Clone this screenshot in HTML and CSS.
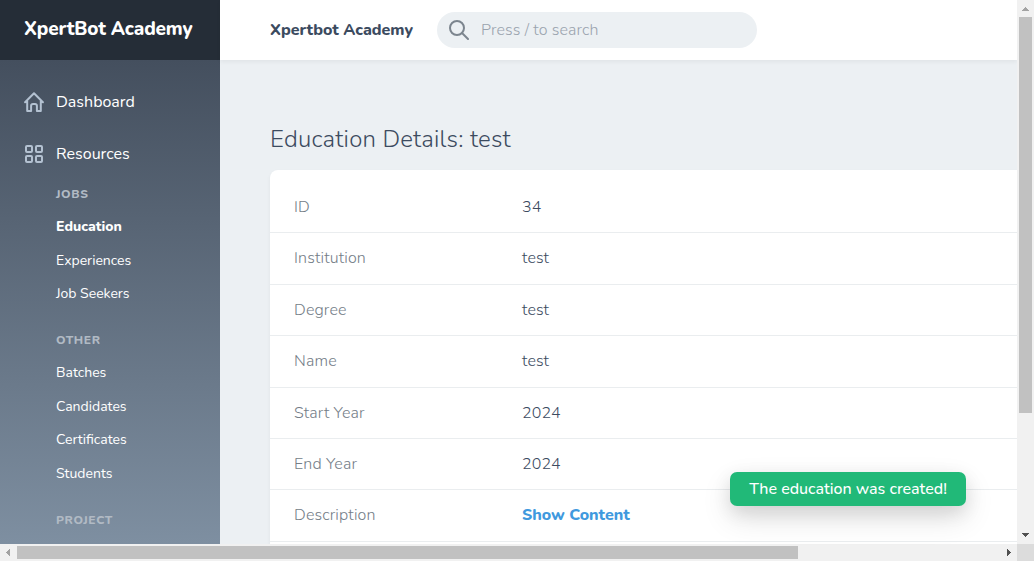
FILE: index.html
```html
<!DOCTYPE html>
<html lang="en">
<head>
<meta charset="utf-8">
<title>Education Details</title>
<link rel="stylesheet" href="styles.css">
</head>
<body>
<div class="window">
  <div class="viewport">
    <aside class="sidebar">
      <div class="brand"><span class="brand-name">XpertBot Academy</span></div>
      <nav class="nav">
        <a class="nav-main">
          <svg class="nav-icon" viewBox="0 0 20 20"><path d="M1.1 10.3 10 1.3l8.9 9M3.2 9v9.9h3.9v-5.2a1.9 1.9 0 0 1 1.9-1.8h2a1.9 1.9 0 0 1 1.9 1.8v5.2h3.9V9"/></svg>
          <span class="nav-text">Dashboard</span>
        </a>
        <a class="nav-main">
          <svg class="nav-icon" viewBox="0 0 20 20"><rect x="2" y="2" width="6" height="6" rx="1"/><rect x="12" y="2" width="6" height="6" rx="1"/><rect x="2" y="12" width="6" height="6" rx="1"/><rect x="12" y="12" width="6" height="6" rx="1"/></svg>
          <span class="nav-text">Resources</span>
        </a>
        <h4 class="group">JOBS</h4>
        <a class="link active">Education</a>
        <a class="link">Experiences</a>
        <a class="link">Job Seekers</a>
        <h4 class="group next">OTHER</h4>
        <a class="link">Batches</a>
        <a class="link">Candidates</a>
        <a class="link">Certificates</a>
        <a class="link">Students</a>
        <h4 class="group next">PROJECT</h4>
      </nav>
    </aside>
    <div class="content">
      <header class="topbar">
        <span class="site">Xpertbot Academy</span>
        <div class="search">
          <svg class="search-icon" viewBox="0 0 20 20"><circle cx="8" cy="8" r="7"/><path d="m13 13 6 6"/></svg>
          <span class="hint">Press / to search</span>
        </div>
      </header>
      <main class="page">
        <h1 class="title">Education Details: test</h1>
        <div class="card">
          <div class="row"><span class="label">ID</span><span class="value">34</span></div>
          <div class="row"><span class="label">Institution</span><span class="value">test</span></div>
          <div class="row"><span class="label">Degree</span><span class="value">test</span></div>
          <div class="row"><span class="label">Name</span><span class="value">test</span></div>
          <div class="row"><span class="label">Start Year</span><span class="value">2024</span></div>
          <div class="row"><span class="label">End Year</span><span class="value">2024</span></div>
          <div class="row"><span class="label">Description</span><a class="show">Show Content</a></div>
          <div class="row"></div>
        </div>
      </main>
    </div>
  </div>
  <div class="vbar">
    <svg class="arrow" viewBox="0 0 17 17"><path class="dim" d="M8 7h1v1h1v1h1v1h1v1H5v-1h1V9h1V8h1z"/></svg>
    <div class="vthumb"></div>
    <svg class="arrow end" viewBox="0 0 17 17"><path d="M5 6h7v1h-1v1h-1v1H9v1H8V9H7V8H6V7H5z"/></svg>
  </div>
  <div class="hbar">
    <svg class="arrow" viewBox="0 0 17 17"><path class="dim" d="M10 5v7H9v-1H8v-1H7V9H6V8h1V7h1V6h1V5z"/></svg>
    <div class="hthumb"></div>
    <svg class="arrow end" viewBox="0 0 17 17"><path d="M7 5v7h1v-1h1v-1h1V9h1V8h-1V7H9V6H8V5z"/></svg>
  </div>
  <div class="corner"></div>
  <div class="toast">The education was created!</div>
</div>
</body>
</html>
```
FILE: styles.css
```css
* { box-sizing: border-box; }
body { margin: 0; font: 16px/1.2 Nunito, Lato, "Open Sans", sans-serif; color: #3c4b5f; overflow: hidden; }
.window { position: relative; width: 1034px; height: 561px; display: grid; grid-template: 544px 17px / 1017px 17px; }
.viewport { display: flex; overflow: hidden; background: #ecf0f3; }
.sidebar { flex: 0 0 220px; background: linear-gradient(#444f5e 60px, #7e8fa1); color: #fff; }
.brand { height: 60px; padding: 18px 24px 0; background: #252d37; font-size: 19px; line-height: 23px; font-weight: 800; letter-spacing: -.17px; white-space: nowrap; }
.nav { padding-top: 16px; }
.nav-main { display: flex; align-items: center; gap: 12px; height: 52px; padding-left: 24px; }
.nav-text { line-height: 20px; }
.nav-icon { width: 20px; height: 20px; fill: none; stroke: #b3c1d1; stroke-width: 2; stroke-linejoin: round; stroke-linecap: round; }
.group { margin: 5px 0 15px 56px; font-size: 12px; line-height: 18px; font-weight: 800; letter-spacing: .6px; color: #b1bac4; }
.group.next { margin-top: 29px; }
.link { display: block; height: 17px; margin: 0 0 16.55px 56px; font-size: 14px; line-height: 17px; }
.link.active { font-weight: 800; }
.content { flex: 1; min-width: 0; }
.topbar { height: 60px; display: flex; align-items: center; gap: 24px; padding-left: 50px; background: #fff; box-shadow: 0 2px 4px rgba(0,0,0,.05); }
.site { width: 143px; line-height: 20px; font-weight: 800; white-space: nowrap; }
.search { width: 320px; height: 36px; border-radius: 18px; background: #ecf0f3; display: flex; align-items: center; gap: 12px; padding-left: 12px; }
.search-icon { width: 20px; height: 20px; fill: none; stroke: #7c858e; stroke-width: 2; stroke-linecap: round; }
.hint { line-height: 20px; font-weight: 300; letter-spacing: .12px; color: #9aa3ae; }
.page { padding: 64px 0 0 50px; }
.title { margin: 0 0 16px; font-size: 24px; font-weight: 300; letter-spacing: .21px; line-height: 30px; white-space: nowrap; }
.card { background: #fff; border-radius: 8px 0 0; padding-top: 12px; box-shadow: 0 2px 4px rgba(0,0,0,.05); }
.row { display: flex; height: 51.4px; padding: 15px 24px 0; border-bottom: 1px solid #eaedef; line-height: 20px; font-weight: 300; }
.label { width: 228px; letter-spacing: .15px; color: #747d87; }
.value { letter-spacing: .1px; }
.show { color: #4099de; font-weight: 800; }
.vbar, .hbar { background: #f1f1f1; display: flex; }
.vbar { flex-direction: column; align-items: center; }
.hbar { align-items: center; }
.vthumb { width: 13px; height: 396px; background: #c1c1c1; }
.hthumb { width: 781px; height: 13px; background: #c1c1c1; }
.arrow { width: 17px; height: 17px; flex: none; fill: #505050; shape-rendering: crispEdges; }
.dim { fill: #a3a3a3; }
.vbar .end { margin-top: auto; }
.hbar .end { margin-left: auto; }
.corner { background: #dcdcdc; }
.toast { position: absolute; left: 730px; top: 472px; width: 236px; height: 34px; border-radius: 7px; background: #21b978; color: #fff; line-height: 34px; text-align: center; font-weight: 500; letter-spacing: -.02px; box-shadow: 0 12px 30px rgba(0,0,0,.12), 0 6px 18px rgba(0,0,0,.1); white-space: nowrap; }
```
